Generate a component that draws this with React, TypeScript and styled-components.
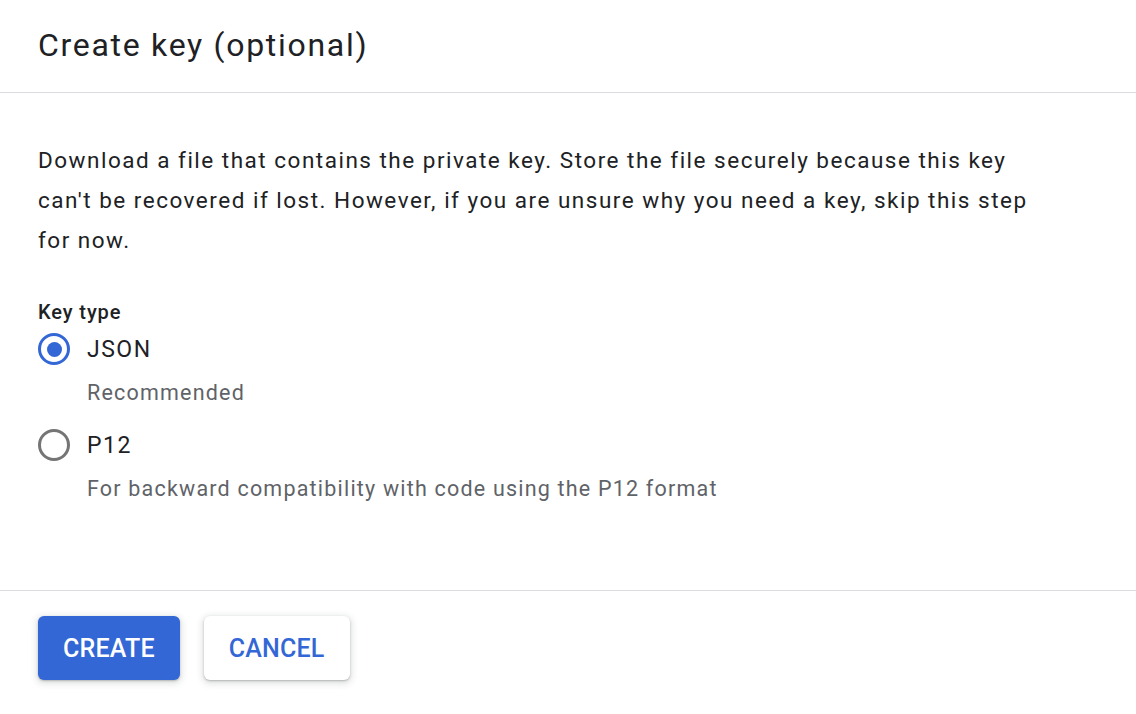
import styled, { createGlobalStyle } from "styled-components";

const GlobalStyle = createGlobalStyle`
  html, body {
    margin: 0;
    padding: 0;
    background: #fff;
  }
  body {
    font-family: Roboto, "Liberation Sans", sans-serif;
    color: #202124;
  }
`;

const Dialog = styled.div`
  display: flex;
  flex-direction: column;
  min-height: 100vh;
  box-sizing: border-box;
`;

const Header = styled.header`
  height: 92px;
  padding: 0 38px;
  display: flex;
  align-items: center;
  border-bottom: 1px solid #dadce0;
`;

const Title = styled.h1`
  margin: -2px 0 0;
  font-size: 32px;
  font-weight: 400;
  letter-spacing: 1.7px;
  color: #202124;
`;

const Content = styled.section`
  flex: 1;
  padding: 47px 38px 0;
`;

const Description = styled.p`
  margin: 0;
  font-size: 22.5px;
  line-height: 40px;
  letter-spacing: 1.5px;
  max-width: 1000px;
  color: #202124;
`;

const GroupLabel = styled.div`
  margin-top: 38px;
  font-size: 20px;
  line-height: 28px;
  font-weight: 500;
  letter-spacing: 0.9px;
  color: #202124;
`;

const Option = styled.label<{ first?: boolean }>`
  display: block;
  margin-top: ${(p) => (p.first ? "7px" : "22px")};
`;

const OptionRow = styled.div`
  display: flex;
  align-items: center;
  gap: 17px;
  height: 32px;
`;

const Radio = styled.span<{ checked?: boolean }>`
  width: 32px;
  height: 32px;
  box-sizing: border-box;
  border-radius: 50%;
  border: 3.5px solid ${(p) => (p.checked ? "#3367d6" : "#757575")};
  display: flex;
  align-items: center;
  justify-content: center;
  flex-shrink: 0;

  &::after {
    content: "";
    width: 15px;
    height: 15px;
    border-radius: 50%;
    background: #3367d6;
    display: ${(p) => (p.checked ? "block" : "none")};
  }
`;

const OptionName = styled.span`
  font-size: 23px;
  letter-spacing: 1.5px;
  color: #202124;
`;

const OptionHint = styled.div`
  margin-top: 14px;
  padding-left: 49px;
  font-size: 21.5px;
  line-height: 28px;
  letter-spacing: 1.2px;
  color: #5f6368;
`;

const Footer = styled.footer`
  border-top: 1px solid #dadce0;
  padding: 25px 38px 34px;
  display: flex;
  gap: 24px;
`;

const Button = styled.button<{ primary?: boolean }>`
  height: 64px;
  padding: 0 25px;
  border: none;
  border-radius: 6px;
  font-family: Roboto, "Liberation Sans", sans-serif;
  font-size: 25px;
  font-weight: 500;
  letter-spacing: 0.2px;
  cursor: pointer;
  background: ${(p) => (p.primary ? "#3367d6" : "#fff")};
  color: ${(p) => (p.primary ? "#fff" : "#3367d6")};
  box-shadow: 0 1px 2px rgba(60, 64, 67, 0.3), 0 2px 6px 2px rgba(60, 64, 67, 0.15);
`;

const options = [
  { name: "JSON", hint: "Recommended", checked: true },
  { name: "P12", hint: "For backward compatibility with code using the P12 format", checked: false },
];

export default function App() {
  return (
    <>
      <GlobalStyle />
      <Dialog>
        <Header>
          <Title>Create key (optional)</Title>
        </Header>
        <Content>
          <Description>
            Download a file that contains the private key. Store the file securely because this key
            can't be recovered if lost. However, if you are unsure why you need a key, skip this step
            for now.
          </Description>
          <GroupLabel>Key type</GroupLabel>
          {options.map((o, i) => (
            <Option key={o.name} first={i === 0}>
              <OptionRow>
                <Radio checked={o.checked} />
                <OptionName>{o.name}</OptionName>
              </OptionRow>
              <OptionHint>{o.hint}</OptionHint>
            </Option>
          ))}
        </Content>
        <Footer>
          <Button primary>CREATE</Button>
          <Button>CANCEL</Button>
        </Footer>
      </Dialog>
    </>
  );
}
